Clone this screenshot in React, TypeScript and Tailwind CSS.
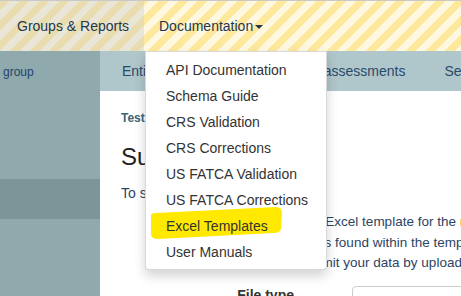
const menuItems = [
  'API Documentation',
  'Schema Guide',
  'CRS Validation',
  'CRS Corrections',
  'US FATCA Validation',
  'US FATCA Corrections',
  'Excel Templates',
  'User Manuals',
]

export default function App() {
  return (
    <div className="relative w-[461px] h-[296px] overflow-hidden bg-white font-['Liberation_Sans',Arial,sans-serif] text-[14px]">
      {/* top nav */}
      <div className="h-[51px] flex border-t border-[#c9c9c9] bg-[repeating-linear-gradient(135deg,#fde89c_0,#fde89c_7px,#fef8e1_7px,#fef8e1_14px)]">
        <div className="w-[144px] h-full flex items-center pl-[17px] bg-[rgba(205,205,205,0.42)] text-[#22374f]">
          Groups &amp; Reports
        </div>
        <div className="relative h-full flex items-center pl-[15px] text-[#22374f]">
          Documentation
          <span className="ml-[2px] mt-[1px] w-0 h-0 border-x-[4px] border-x-transparent border-t-[4px] border-t-[#22374f]" />
        </div>
      </div>

      {/* body */}
      <div className="flex h-[245px]">
        <div className="w-[100px] shrink-0 bg-[#8fa9ad] flex flex-col">
          <div className="pt-[13px] pl-[3px] text-[12px] leading-[16px] text-[#1e4670]">group</div>
          <div className="mt-[99px] h-[40px] bg-[#7b9599]" />
        </div>

        <div className="flex-1 min-w-0 flex flex-col">
          <div className="h-[40px] shrink-0 bg-[#afc6ca] flex items-center gap-[39px] pl-[22px] whitespace-nowrap text-[#2a4a6c]">
            <span>Entities</span>
            <span>Reports</span>
            <span>Self-assessments</span>
            <span>Settings</span>
          </div>

          <div className="pl-[21px] pt-[19px] whitespace-nowrap">
            <div className="text-[12px] leading-[17px] font-bold text-[#3c6577]">Test Entity</div>
            <h2 className="mt-[17px] text-[24px] leading-[26px] text-[#222]">Submit a Template</h2>
            <p className="mt-[13px] leading-[20px] text-[#2d4463]">To submit your data:</p>
            <ol className="mt-[9px] list-decimal pl-[46px] text-[13.5px] leading-[20.5px] text-[#2d4463]">
              <li>
                Download the appropriate Excel template for the{' '}
                <span className="text-[#e7892b]">relevant reporting regime</span>.
              </li>
              <li>Complete the needed fields found within the template.</li>
              <li>When it is completed, submit your data by uploading the file below.</li>
            </ol>
            <div className="mt-[12px] flex">
              <div className="w-[231px] shrink-0 pr-[58px] text-right font-bold text-[#333] leading-[18px]">File type</div>
              <div className="w-[200px] h-[34px] shrink-0 border border-[#ccc] rounded-[4px]" />
            </div>
          </div>
        </div>
      </div>

      {/* dropdown */}
      <div className="absolute left-[145px] top-[51px] w-[182px] bg-white border border-[rgba(0,0,0,0.15)] rounded-b-[4px] shadow-[0_6px_12px_rgba(0,0,0,0.175)] pt-[5px] pb-[4px]">
        <svg className="absolute left-0 top-0" width="182" height="218" viewBox="0 0 182 218">
          <path
            d="M5,165 Q4,161 10,161 L130,155 Q136,155 136,161 L135,177 Q134,181 128,181 L12,187 Q5,187 5,182 Z"
            fill="#ffe900"
          />
        </svg>
        <ul className="relative">
          {menuItems.map((item) => (
            <li key={item} className="px-[20px] py-[3px] leading-[20px] text-[#333] whitespace-nowrap">
              {item}
            </li>
          ))}
        </ul>
      </div>
    </div>
  )
}
